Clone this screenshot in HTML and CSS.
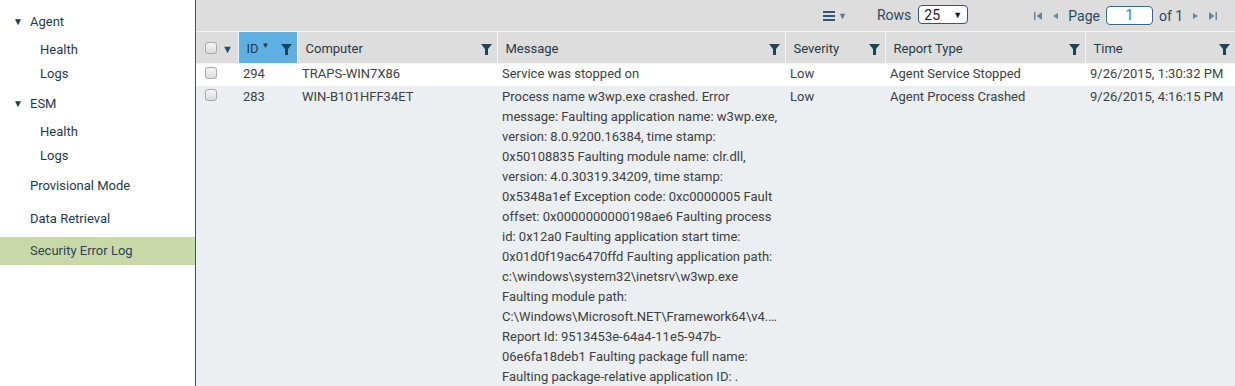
FILE: index.html
```html
<!DOCTYPE html>
<html lang="en">
<head>
    <meta charset="UTF-8">
    <title>Security Error Log</title>
    <link rel="stylesheet" href="styles.css">
</head>
<body>
    <nav class="sidebar">
        <ul class="nav">
            <li class="nav-group"><span class="caret">&#9660;</span>Agent</li>
            <li class="nav-sub">Health</li>
            <li class="nav-sub">Logs</li>
            <li class="nav-group"><span class="caret">&#9660;</span>ESM</li>
            <li class="nav-sub">Health</li>
            <li class="nav-sub">Logs</li>
            <li class="nav-item">Provisional Mode</li>
            <li class="nav-item">Data Retrieval</li>
            <li class="nav-item active">Security Error Log</li>
        </ul>
    </nav>

    <main class="content">
        <div class="toolbar">
            <div class="menu-btn">
                <svg width="12" height="10" viewBox="0 0 12 10"><rect y="0" width="12" height="2"/><rect y="4" width="12" height="2"/><rect y="8" width="12" height="2"/></svg>
                <span class="menu-caret">&#9660;</span>
            </div>
            <label class="rows">Rows
                <span class="select">25<span class="select-arrow">&#9660;</span></span>
            </label>
            <div class="pager">
                <svg class="pg" width="8" height="8" viewBox="0 0 8 8"><rect x="0" y="0" width="1.5" height="8"/><polygon points="8,0 8,8 2.5,4"/></svg>
                <svg class="pg" width="6" height="8" viewBox="0 0 6 8"><polygon points="6,1 6,7 1,4"/></svg>
                <span class="pg-label">Page</span>
                <span class="page-input">1</span>
                <span class="pg-label">of 1</span>
                <svg class="pg" width="6" height="8" viewBox="0 0 6 8"><polygon points="0,1 0,7 5,4"/></svg>
                <svg class="pg" width="8" height="8" viewBox="0 0 8 8"><polygon points="0,0 0,8 5.5,4"/><rect x="6.5" y="0" width="1.5" height="8"/></svg>
            </div>
        </div>

        <table class="grid">
            <colgroup>
                <col class="c-check">
                <col class="c-id">
                <col class="c-computer">
                <col class="c-message">
                <col class="c-severity">
                <col class="c-type">
                <col class="c-time">
            </colgroup>
            <thead>
                <tr>
                    <th class="check-col"><span class="checkbox"></span><span class="head-caret">&#9660;</span></th>
                    <th class="sorted">ID<span class="sort">&#9660;</span><svg class="filter" viewBox="0 0 11 11"><polygon points="0,0 11,0 7,5 7,11 4,11 4,5"/></svg></th>
                    <th>Computer<svg class="filter" viewBox="0 0 11 11"><polygon points="0,0 11,0 7,5 7,11 4,11 4,5"/></svg></th>
                    <th>Message<svg class="filter" viewBox="0 0 11 11"><polygon points="0,0 11,0 7,5 7,11 4,11 4,5"/></svg></th>
                    <th>Severity<svg class="filter" viewBox="0 0 11 11"><polygon points="0,0 11,0 7,5 7,11 4,11 4,5"/></svg></th>
                    <th>Report Type<svg class="filter" viewBox="0 0 11 11"><polygon points="0,0 11,0 7,5 7,11 4,11 4,5"/></svg></th>
                    <th>Time<svg class="filter" viewBox="0 0 11 11"><polygon points="0,0 11,0 7,5 7,11 4,11 4,5"/></svg></th>
                </tr>
            </thead>
            <tbody>
                <tr>
                    <td class="check-col"><span class="checkbox"></span></td>
                    <td>294</td>
                    <td>TRAPS-WIN7X86</td>
                    <td>Service was stopped on</td>
                    <td>Low</td>
                    <td>Agent Service Stopped</td>
                    <td>9/26/2015, 1:30:32 PM</td>
                </tr>
                <tr class="alt">
                    <td class="check-col"><span class="checkbox"></span></td>
                    <td>283</td>
                    <td>WIN-B101HFF34ET</td>
                    <td class="msg">Process name w3wp.exe crashed. Error message: Faulting application name: w3wp.exe, version: 8.0.9200.16384, time stamp: 0x50108835 Faulting module name: clr.dll, version: 4.0.30319.34209, time stamp: 0x5348a1ef Exception code: 0xc0000005 Fault offset: 0x0000000000198ae6 Faulting process id: 0x12a0 Faulting application start time: 0x01d0f19ac6470ffd Faulting application path: c:\windows\system32\inetsrv\w3wp.exe Faulting module path: <span class="ellipsis">C:\Windows\Microsoft.NET\Framework64\v4.0.30319\clr.dll</span> Report Id: 9513453e-64a4-11e5-947b-06e6fa18deb1 Faulting package full name: Faulting package-relative application ID: .</td>
                    <td>Low</td>
                    <td>Agent Process Crashed</td>
                    <td>9/26/2015, 4:16:15 PM</td>
                </tr>
            </tbody>
        </table>
    </main>
</body>
</html>
```

FILE: styles.css
```css
body {
    margin: 0;
    display: flex;
    height: 386px;
    overflow: hidden;
    font-family: Roboto, "Liberation Sans", Arial, sans-serif;
    font-size: 13px;
    color: #404040;
}
.sidebar {
    width: 195px;
    flex: none;
    background: #fff;
    border-right: 1px solid #275a78;
}
.nav {
    list-style: none;
    margin: 0;
    padding: 12px 0 0;
    color: #1f3a4e;
}
.nav li {
    line-height: 20px;
}
.nav-group {
    padding-left: 13px;
    margin-bottom: 8px;
}
.nav-group .caret {
    display: inline-block;
    width: 17px;
    font-size: 10px;
    color: #1a3f52;
    vertical-align: 1px;
}
.nav-sub {
    padding-left: 40px;
    margin-bottom: 4px;
}
.nav-sub + .nav-group {
    margin-top: 10px;
}
.nav-sub + .nav-item {
    margin-top: 6px;
}
.nav-item {
    padding-left: 30px;
    line-height: 28px !important;
    margin-bottom: 5px;
}
.nav-item:nth-child(8) {
    margin-bottom: 4px;
}
.nav-item.active {
    background: #c9d8a8;
    color: #2b4657;
}
.content {
    flex: 1;
    background: #ebeff2;
    display: flex;
    flex-direction: column;
}
.toolbar {
    height: 31px;
    flex: none;
    background: #dddddd;
    border-bottom: 1px solid #f4f4f4;
    display: flex;
    align-items: center;
    font-size: 14px;
    color: #2a4a60;
}
.menu-btn {
    margin-left: 627px;
    display: flex;
    align-items: center;
    gap: 3px;
}
.menu-btn svg {
    fill: #2e5877;
}
.menu-caret {
    font-size: 9px;
    color: #5b7a8f;
}
.rows {
    margin-left: 30px;
    display: flex;
    align-items: center;
    gap: 7px;
    padding-bottom: 2px;
}
.select {
    display: inline-flex;
    justify-content: space-between;
    align-items: center;
    box-sizing: border-box;
    width: 50px;
    height: 19px;
    padding: 0 5px;
    background: #fff;
    border: 1px solid #2e5877;
    border-radius: 4px;
    color: #1a1a1a;
    font-size: 14px;
}
.select-arrow {
    font-size: 9px;
}
.pager {
    margin-left: 66px;
    display: flex;
    align-items: center;
}
.pg {
    fill: #6b8597;
    margin-right: 10px;
}
.pg-label {
    margin-right: 6px;
}
.pager .pg-label + .pg {
    margin-left: 4px;
}
.page-input {
    box-sizing: border-box;
    width: 47px;
    height: 19px;
    margin-right: 6px;
    background: #fff;
    border: 1px solid #3b6785;
    border-radius: 4px;
    color: #2c7ac0;
    text-align: center;
    line-height: 17px;
}
.grid {
    border-collapse: collapse;
    table-layout: fixed;
    width: 100%;
}
.c-check { width: 42px; }
.c-id { width: 59px; }
.c-computer { width: 200px; }
.c-message { width: 288px; }
.c-severity { width: 100px; }
.c-type { width: 200px; }
.c-time { width: 150px; }
.grid th {
    height: 30px;
    background: #dddddd;
    border-right: 1px solid #f4f4f4;
    border-bottom: 1px solid #f4f4f4;
    text-align: left;
    font-weight: normal;
    color: #1f3a4e;
    padding: 1px 0 0 8px;
    position: relative;
}
.grid th:last-child {
    border-right: none;
}
.grid th.sorted {
    background: #5fb0e2;
}
.sort {
    font-size: 8px;
    vertical-align: 5px;
    margin-left: 3px;
    color: #1d3c55;
}
.filter {
    position: absolute;
    right: 5px;
    top: 12px;
    width: 11px;
    height: 11px;
    fill: #1b4658;
}
.head-caret {
    font-size: 11px;
    color: #1d4c6b;
    margin-left: 5px;
    vertical-align: 0;
}
.check-col {
    padding-left: 9px !important;
}
.checkbox {
    display: inline-block;
    box-sizing: border-box;
    width: 12px;
    height: 12px;
    border: 1px solid #a8a8a8;
    border-radius: 3px;
    background: linear-gradient(#f6f6f6, #dcdcdc);
    vertical-align: -1px;
}
.grid td {
    padding: 1px 3px 0 5px;
    line-height: 20px;
    vertical-align: top;
    background: #fff;
}
.grid tbody tr:first-child td {
    padding-top: 0;
    padding-bottom: 2px;
}
.grid td.check-col {
    padding-top: 0;
}
.grid tr.alt td {
    background: #ebeff2;
}
.ellipsis {
    display: block;
    white-space: nowrap;
    overflow: hidden;
    text-overflow: ellipsis;
}
```
